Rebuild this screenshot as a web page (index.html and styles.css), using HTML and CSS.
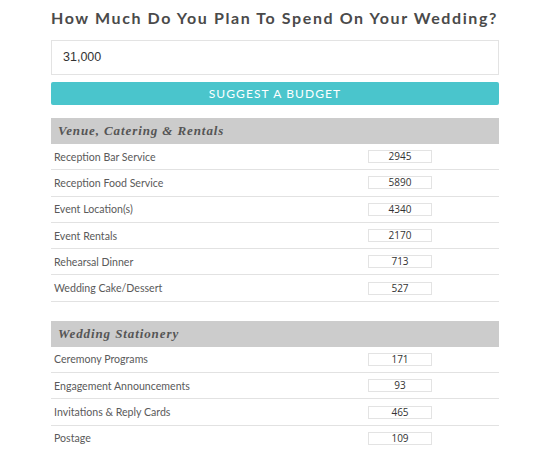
FILE: index.html
```html
<!DOCTYPE html>
<html>
<head>
<meta charset="utf-8">
<link rel="stylesheet" href="styles.css">
</head>
<body>
<div class="wrap">
  <h1 class="title">How Much Do You Plan To Spend On Your Wedding?</h1>
  <div class="amount">31,000</div>
  <button class="suggest">SUGGEST A BUDGET</button>

  <section class="group">
    <h2 class="group-head">Venue, Catering &amp; Rentals</h2>
    <div class="row"><span class="label">Reception Bar Service</span><span class="val">2945</span></div>
    <div class="row"><span class="label">Reception Food Service</span><span class="val">5890</span></div>
    <div class="row"><span class="label">Event Location(s)</span><span class="val">4340</span></div>
    <div class="row"><span class="label">Event Rentals</span><span class="val">2170</span></div>
    <div class="row"><span class="label">Rehearsal Dinner</span><span class="val">713</span></div>
    <div class="row"><span class="label">Wedding Cake/Dessert</span><span class="val">527</span></div>
  </section>

  <section class="group">
    <h2 class="group-head">Wedding Stationery</h2>
    <div class="row"><span class="label">Ceremony Programs</span><span class="val">171</span></div>
    <div class="row"><span class="label">Engagement Announcements</span><span class="val">93</span></div>
    <div class="row"><span class="label">Invitations &amp; Reply Cards</span><span class="val">465</span></div>
    <div class="row"><span class="label">Postage</span><span class="val">109</span></div>
  </section>
</div>
</body>
</html>
```

FILE: styles.css
```css
html, body {
  margin: 0;
  padding: 0;
  background: #fff;
}
.wrap {
  width: 448px;
  margin-left: 51px;
  padding-top: 8px;
}
.title {
  margin: 0;
  font-family: "Lato", sans-serif;
  font-weight: 700;
  font-size: 16px;
  letter-spacing: 1.6px;
  color: #4a4a4a;
  line-height: 20px;
  white-space: nowrap;
}
.amount {
  box-sizing: border-box;
  margin-top: 12px;
  height: 35px;
  border: 1px solid #e3e3e3;
  padding: 0 11px;
  font-family: "Liberation Sans", Arial, sans-serif;
  font-size: 12.5px;
  line-height: 33px;
  color: #333;
}
.suggest {
  display: block;
  width: 100%;
  margin-top: 7px;
  height: 23px;
  border: none;
  border-radius: 2px;
  background: #4ac5cc;
  color: #fff;
  font-family: "Lato", sans-serif;
  font-size: 12px;
  letter-spacing: 1.1px;
  padding: 0;
  line-height: 23px;
}
.group {
  margin-top: 13px;
}
.group + .group {
  margin-top: 19px;
}
.group-head {
  margin: 0;
  height: 26px;
  background: #cccccc;
  padding-left: 7px;
  font-family: "Liberation Serif", "Times New Roman", serif;
  font-style: italic;
  font-weight: 700;
  font-size: 13px;
  letter-spacing: 0.9px;
  line-height: 26px;
  color: #555;
}
.row {
  display: flex;
  align-items: center;
  border-bottom: 1px solid #e2e2e2;
  box-sizing: border-box;
  height: 26.3px;
}
.label {
  flex: 1;
  padding-left: 3px;
  font-family: "Lato", sans-serif;
  font-size: 10.6px;
  color: #5a5a5a;
}
.val {
  box-sizing: border-box;
  width: 64px;
  height: 13px;
  margin-right: 67px;
  border: 1px solid #e3e3e3;
  text-align: center;
  font-family: "Open Sans", sans-serif;
  font-size: 10px;
  line-height: 11px;
  color: #333;
}
```
